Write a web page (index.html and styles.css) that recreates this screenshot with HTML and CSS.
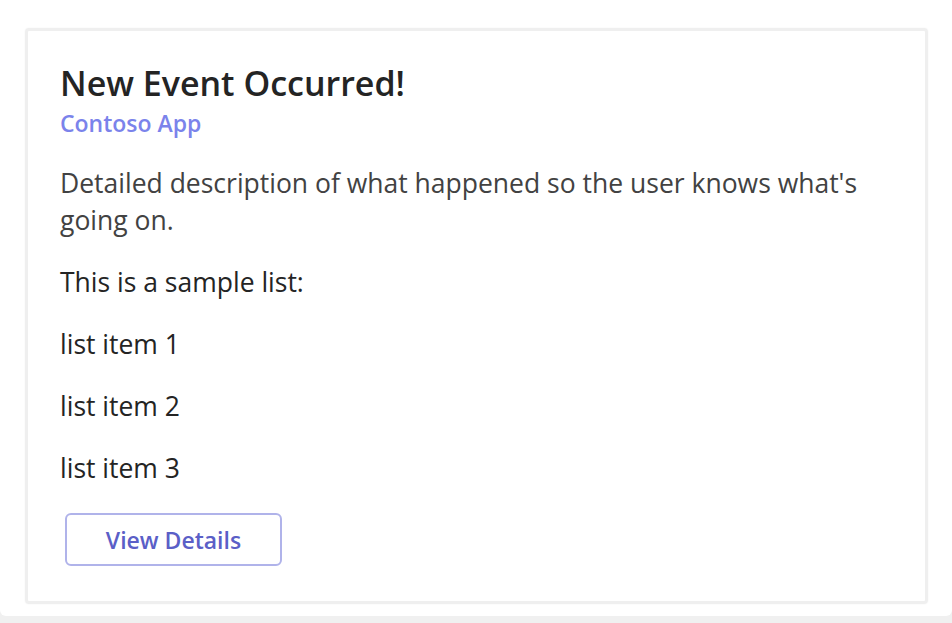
FILE: index.html
```html
<!DOCTYPE html>
<html lang="en">
<head>
<meta charset="utf-8">
<title>New Event Occurred!</title>
<link rel="stylesheet" href="styles.css">
</head>
<body>
  <div class="surface">
    <div class="card">
      <div class="title">New Event Occurred!</div>
      <div class="subtitle">Contoso App</div>
      <div class="desc">Detailed description of what happened so the user knows what's going on.</div>
      <div class="text lead">This is a sample list:</div>
      <div class="text">list item 1</div>
      <div class="text">list item 2</div>
      <div class="text">list item 3</div>
      <div class="actions">
        <button class="btn" type="button">View Details</button>
      </div>
    </div>
  </div>
</body>
</html>
```

FILE: styles.css
```css
html, body {
  margin: 0;
  padding: 0;
}
body {
  background: #f0f0f0;
  font-family: "Open Sans", "Noto Sans", sans-serif;
  width: 952px;
  height: 623px;
  overflow: hidden;
}
.surface {
  background: #ffffff;
  height: 616px;
  box-sizing: border-box;
  padding: 28px 24px 0 25px;
  border-radius: 0 0 6px 6px;
}
.card {
  display: flex;
  flex-direction: column;
  align-items: flex-start;
  box-sizing: border-box;
  height: 576px;
  border: 3px solid #efefef;
  border-radius: 4px;
  padding: 32px 32px 0 32px;
  box-shadow: 0 0 2px rgba(0,0,0,0.06);
}
.title {
  font-size: 34px;
  line-height: 40px;
  font-weight: 600;
  color: #242424;
}
.subtitle {
  margin-top: 6px;
  font-size: 23px;
  line-height: 28px;
  font-weight: 600;
  color: #7b83eb;
}
.desc {
  margin-top: 28px;
  font-size: 26.5px;
  line-height: 37px;
  color: #424242;
}
.text {
  margin-top: 26px;
  font-size: 26.5px;
  line-height: 36px;
  color: #242424;
}
.text.lead {
  margin-top: 25px;
}
.actions {
  margin-top: 27px;
  padding-left: 5px;
}
.btn {
  width: 217px;
  height: 53px;
  box-sizing: border-box;
  border: 2px solid #b0b3ea;
  border-radius: 6px;
  background: #ffffff;
  color: #5b5fc7;
  font-family: inherit;
  font-size: 23px;
  font-weight: 600;
  padding: 0;
}
```
